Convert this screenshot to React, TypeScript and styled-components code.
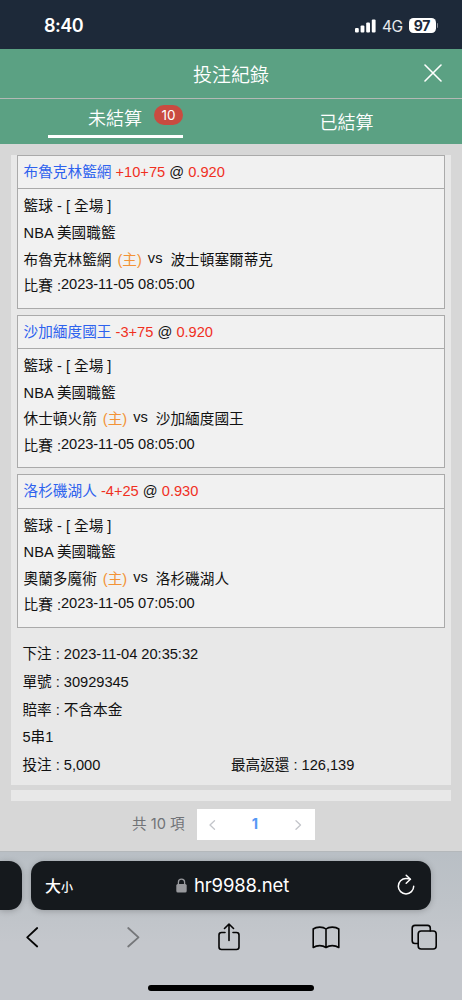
import React from 'react';
import styled, { createGlobalStyle } from 'styled-components';

const Global = createGlobalStyle`
  * { box-sizing: border-box; }
  body { margin: 0; background: #d7d7d7; }
`;

const Screen = styled.div`
  width: 462px;
  height: 1000px;
  overflow: hidden;
  display: flex;
  flex-direction: column;
  background: #d7d7d7;
  font-family: 'Liberation Sans', 'Noto Sans CJK TC', sans-serif;
  color: #111;
  white-space: nowrap;
`;

const StatusBar = styled.div`
  height: 49px;
  flex: none;
  background: #1d2939;
  color: #fff;
  display: flex;
  align-items: center;
  justify-content: space-between;
  padding: 2px 24px 0 44px;
  font-family: Inter, sans-serif;
`;

const Clock = styled.span`
  font-size: 18px;
  font-weight: 600;
  letter-spacing: -0.5px;
`;

const StatusIcons = styled.div`
  display: flex;
  align-items: center;
`;

const Network = styled.span`
  font-size: 15.5px;
  margin: 1px 6px 0 6px;
  letter-spacing: -0.6px;
  color: #e8eaed;
`;

const Battery = styled.div`
  width: 27px;
  height: 15px;
  border-radius: 4.5px;
  background: #fff;
  color: #1d2939;
  font-size: 14px;
  font-weight: 700;
  line-height: 15px;
  text-align: center;
  letter-spacing: -0.3px;
`;

const BatteryCap = styled.div`
  width: 1.5px;
  height: 5px;
  margin-left: 1px;
  border-radius: 0 2px 2px 0;
  background: #858c95;
`;

const TitleBar = styled.header`
  height: 50px;
  flex: none;
  display: grid;
  grid-template-columns: 60px 1fr 58px;
  align-items: center;
  justify-items: center;
  background: #5ba183;
  border-bottom: 1px solid #b3b9b5;
  color: #fff;
`;

const Title = styled.h1`
  grid-column: 2;
  margin: 0 2px 0 0;
  font-size: 19px;
  font-weight: 350;
`;

const CloseIcon = styled.svg`
  margin-bottom: 2px;
`;

const Tabs = styled.nav`
  height: 45px;
  flex: none;
  display: grid;
  grid-template-columns: 1fr 1fr;
  background: #5ba183;
  color: #fff;
  font-size: 18px;
  font-weight: 350;
`;

const Tab = styled.div<{ $active?: boolean }>`
  display: flex;
  justify-content: center;
  align-items: ${(p) => (p.$active ? 'stretch' : 'center')};
  padding-bottom: 1px;
`;

const ActiveLabel = styled.div`
  width: 135px;
  height: 38.5px;
  border-bottom: 3px solid #fff;
  display: flex;
  align-items: center;
  justify-content: flex-end;
  gap: 12px;
`;

const Count = styled.span`
  width: 29px;
  height: 20px;
  margin-top: -4px;
  border-radius: 10px;
  background: #c94b40;
  font: 400 13.5px/20px Inter, sans-serif;
  text-align: center;
`;

const List = styled.main`
  height: 646px;
  flex: none;
  margin-top: 11px;
  padding: 0 11px;
  overflow: hidden;
`;

const Ticket = styled.article`
  height: 629.5px;
  background: #e8e8e8;
  padding: 0 6px;
  margin-bottom: 5.5px;
  font-size: 14.65px;
`;

const Leg = styled.section`
  height: 153.7px;
  margin-bottom: 5.9px;
  border: 1px solid #aaa;
  background: #f1f1f1;
`;

const LegHead = styled.div`
  height: 33.4px;
  border-bottom: 1px solid #aaa;
  line-height: 33.4px;
  padding-left: 5.6px;
  margin-bottom: 4.1px;
`;

const Row = styled.div`
  height: 26.6px;
  line-height: 26.6px;
  padding-left: 5.6px;
  display: flex;
`;

const Pick = styled.span`
  color: #2d62ee;
`;

const Price = styled.span`
  color: #f0301f;
`;

const Home = styled.span`
  color: #f39336;
  margin: 0 6px;
`;

const Versus = styled.span`
  margin: -2px 8px 0 0;
`;

const Kickoff = styled.span`
  margin-top: -2px;
  letter-spacing: -0.07px;
`;

const Summary = styled.dl`
  margin: 0;
  padding: 7px 0 0 5.5px;
  letter-spacing: -0.03px;
`;

const SummaryRow = styled.div`
  height: 27.9px;
  line-height: 27.9px;
  display: grid;
  grid-template-columns: 208.5px 1fr;
`;

const Pager = styled.div`
  height: 50px;
  flex: none;
  padding: 8px 0 0 132px;
  display: flex;
  font: 400 14.6px/31px Inter, 'Noto Sans CJK TC', sans-serif;
  color: #707276;
`;

const PagerTotal = styled.span`
  width: 65px;
`;

const PagerBox = styled.div`
  width: 118px;
  height: 31px;
  background: #fff;
  display: grid;
  grid-template-columns: 31px 1fr 33px;
  align-items: center;
  justify-items: center;
`;

const Current = styled.span`
  font-weight: 700;
  color: #5598f5;
`;

const Browser = styled.footer`
  height: 149px;
  flex: none;
  background: linear-gradient(#b9bfc5 0, #bec3c8 50px, #c4c7cc 90px);
  border-top: 1px solid #b4b8bb;
  display: flex;
  flex-direction: column;
  align-items: center;
`;

const AddressRow = styled.div`
  width: 462px;
  margin-top: 8.5px;
  display: flex;
  gap: 9px;
`;

const NeighbourTab = styled.div`
  width: 22px;
  height: 49px;
  border-radius: 0 13px 13px 0;
  background: #15191d;
  box-shadow: 0 1px 6px rgba(0, 0, 0, 0.22);
`;

const AddressBar = styled.div`
  width: 400px;
  height: 49px;
  border-radius: 13px;
  background: #15191d;
  box-shadow: 0 1px 6px rgba(0, 0, 0, 0.22);
  display: grid;
  grid-template-columns: 60px 1fr 60px;
  align-items: center;
  color: #fff;
`;

const TextSize = styled.span<{ $small?: boolean }>`
  font: 500 ${(p) => (p.$small ? 12 : 16)}px 'Noto Sans CJK TC', sans-serif;
`;

const SizeControl = styled.div`
  padding-left: 14px;
  display: flex;
  align-items: baseline;
`;

const Host = styled.div`
  display: flex;
  align-items: center;
  justify-content: center;
  gap: 7px;
  font: 400 18.5px Inter, sans-serif;
  letter-spacing: -0.12px;
  padding-left: 3px;
`;

const Reload = styled.svg`
  justify-self: center;
  margin-left: 10px;
`;

const Toolbar = styled.div`
  width: 462px;
  margin-top: 13px;
  padding: 0 24px 0 18px;
  display: flex;
  align-items: center;
  justify-content: space-between;
`;

const ToolButton = styled.button<{ $shift?: number }>`
  width: 28px;
  height: 28px;
  padding: 0 0 0 ${(p) => p.$shift ?? 0}px;
  border: 0;
  background: none;
  display: flex;
  justify-content: center;
`;

const HomeIndicator = styled.div`
  width: 166px;
  height: 5.5px;
  border-radius: 3px;
  background: #000;
  margin-top: 34.500px;
`;

const legs = [
  { pick: '布魯克林籃網', line: '+10+75', odds: '0.920', home: '布魯克林籃網', away: '波士頓塞爾蒂克', time: '2023-11-05 08:05:00' },
  { pick: '沙加緬度國王', line: '-3+75', odds: '0.920', home: '休士頓火箭', away: '沙加緬度國王', time: '2023-11-05 08:05:00' },
  { pick: '洛杉磯湖人', line: '-4+25', odds: '0.930', home: '奧蘭多魔術', away: '洛杉磯湖人', time: '2023-11-05 07:05:00' },
];

const stroke = { fill: 'none', strokeLinecap: 'round', strokeLinejoin: 'round' } as const;

export default function App() {
  return (
    <Screen>
      <Global />
      <StatusBar>
        <Clock>8:40</Clock>
        <StatusIcons>
          <svg width="21" height="14" viewBox="0 0 21 14" fill="#fff">
            <rect x="0" y="9" width="3.8" height="4.5" rx="1.1" />
            <rect x="5.6" y="6.5" width="3.8" height="7" rx="1.1" />
            <rect x="11.2" y="3.5" width="3.8" height="10" rx="1.1" />
            <rect x="16.8" y="0.5" width="3.8" height="13" rx="1.1" />
          </svg>
          <Network>4G</Network>
          <Battery>97</Battery>
          <BatteryCap />
        </StatusIcons>
      </StatusBar>

      <TitleBar>
        <Title>投注紀錄</Title>
        <CloseIcon width="18" height="18" viewBox="0 0 18 18" stroke="#fff" strokeWidth="1.6" {...stroke}>
          <path d="M1 1 17 17M17 1 1 17" />
        </CloseIcon>
      </TitleBar>

      <Tabs>
        <Tab $active>
          <ActiveLabel>
            未結算<Count>10</Count>
          </ActiveLabel>
        </Tab>
        <Tab>已結算</Tab>
      </Tabs>

      <List>
        <Ticket>
          {legs.map((leg) => (
            <Leg key={leg.pick}>
              <LegHead>
                <Pick>{leg.pick}</Pick> <Price>{leg.line}</Price> @ <Price>{leg.odds}</Price>
              </LegHead>
              <Row>籃球 - [ 全場 ]</Row>
              <Row>NBA 美國職籃</Row>
              <Row>
                {leg.home}
                <Home>(主)</Home>
                <Versus>vs</Versus>
                {leg.away}
              </Row>
              <Row>
                比賽 :<Kickoff>{leg.time}</Kickoff>
              </Row>
            </Leg>
          ))}
          <Summary>
            <SummaryRow>下注 : 2023-11-04 20:35:32</SummaryRow>
            <SummaryRow>單號 : 30929345</SummaryRow>
            <SummaryRow>賠率 : 不含本金</SummaryRow>
            <SummaryRow>5串1</SummaryRow>
            <SummaryRow>
              <span>投注 : 5,000</span>
              <span>最高返還 : 126,139</span>
            </SummaryRow>
          </Summary>
        </Ticket>
        <Ticket />
      </List>

      <Pager>
        <PagerTotal>共 10 項</PagerTotal>
        <PagerBox>
          <svg width="7" height="10" viewBox="0 0 7 10" stroke="#c3c5ca" strokeWidth="1.3" {...stroke}>
            <path d="M5.5 .8 1 5 5.5 9.2" />
          </svg>
          <Current>1</Current>
          <svg width="7" height="10" viewBox="0 0 7 10" stroke="#c3c5ca" strokeWidth="1.3" {...stroke}>
            <path d="M1 .8 5.5 5 1 9.2" />
          </svg>
        </PagerBox>
      </Pager>

      <Browser>
        <AddressRow>
          <NeighbourTab />
          <AddressBar>
            <SizeControl>
              <TextSize>大</TextSize>
              <TextSize $small>小</TextSize>
            </SizeControl>
            <Host>
              <svg width="11" height="15" viewBox="0 0 11 15" fill="#98999d">
                <rect x="0.3" y="6" width="10.4" height="8.6" rx="1.5" />
                <path d="M2.4 7V4.2a3.1 3.1 0 0 1 6.2 0V7" fill="none" stroke="#98999d" strokeWidth="1.3" />
              </svg>
              hr9988.net
            </Host>
            <Reload width="18" height="22" viewBox="0 0 18 22" stroke="#fff" strokeWidth="1.5" {...stroke}>
              <path d="M13.4 5.3C12 4.6 10.5 4.5 9 4.5A7.7 7.7 0 1 0 16.7 12.2" />
              <path d="M9.2 1.2 13.4 5.3 9.2 9.2" />
            </Reload>
          </AddressBar>
        </AddressRow>

        <Toolbar>
          <ToolButton>
            <svg width="16" height="28" viewBox="0 0 16 28" stroke="#050505" strokeWidth="1.8" {...stroke}>
              <path d="M13.2 5 3.2 14.3 13.2 23.5" />
            </svg>
          </ToolButton>
          <ToolButton $shift={5}>
            <svg width="16" height="28" viewBox="0 0 16 28" stroke="#75777a" strokeWidth="1.8" {...stroke}>
              <path d="M3.2 5 13.5 14.3 3.2 23.5" />
            </svg>
          </ToolButton>
          <ToolButton $shift={1}>
            <svg width="24" height="28" viewBox="0 0 24 28" stroke="#050505" strokeWidth="1.6" {...stroke}>
              <path d="M8 9.5H4.5Q2 9.5 2 12V24Q2 26.5 4.5 26.5H19.5Q22 26.5 22 24V12Q22 9.5 19.5 9.5H16" />
              <path d="M12 17.5V1.2M7.5 5.5 12 1 16.5 5.5" />
            </svg>
          </ToolButton>
          <ToolButton>
            <svg width="28" height="28" viewBox="0 0 28 28" stroke="#050505" strokeWidth="1.6" {...stroke}>
              <path d="M14 24.5V6C11 3.5 4.5 3.5 1.2 6V24.5C5 22 10.5 22 14 24.5C17.5 22 23 22 26.8 24.5V6C23.5 3.5 17 3.5 14 6" />
            </svg>
          </ToolButton>
          <ToolButton>
            <svg width="28" height="28" viewBox="0 0 28 28" stroke="#050505" strokeWidth="1.6" {...stroke}>
              <rect x="8.2" y="8" width="18" height="18" rx="3" />
              <path d="M8 20.5H5Q2.2 20.5 2.2 17.7V5.2Q2.2 2.4 5 2.4H17.5Q20.3 2.4 20.3 5.2V8" />
            </svg>
          </ToolButton>
        </Toolbar>
        <HomeIndicator />
      </Browser>
    </Screen>
  );
}
